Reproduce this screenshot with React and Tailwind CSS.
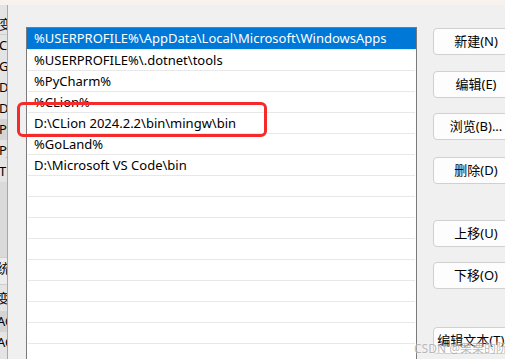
import React from "react";

// Edit environment variable dialog (Windows style)
const paths = [
  "%USERPROFILE%\\AppData\\Local\\Microsoft\\WindowsApps",
  "%USERPROFILE%\\.dotnet\\tools",
  "%PyCharm%",
  "%CLion%",
  "D:\\CLion 2024.2.2\\bin\\mingw\\bin",
  "%GoLand%",
  "D:\\Microsoft VS Code\\bin",
];

const buttons = [
  { label: "新建(N)", mt: "mt-0" },
  { label: "编辑(E)", mt: "mt-[16px]" },
  { label: "浏览(B)...", mt: "mt-[15px]" },
  { label: "删除(D)", mt: "mt-[17px]" },
  { label: "上移(U)", mt: "mt-[36px]" },
  { label: "下移(O)", mt: "mt-[15px]" },
  { label: "编辑文本(T)...", mt: "mt-[38px]" },
];

const sideRows = [
  { text: "变量", cls: "border-b border-[#cfcfcf]" },
  { text: "CLion", cls: "" },
  { text: "GoLand", cls: "" },
  { text: "DriverData", cls: "" },
  { text: "D...", cls: "" },
  { text: "Path", cls: "bg-[#d4d4d4]" },
  { text: "PyCharm", cls: "" },
  { text: "TEMP", cls: "" },
];

const App = () => {
  const emptyRows = Array.from({ length: 12 });

  return (
    <div className="w-[505px] h-[359px] overflow-hidden bg-[#f0f0f0] flex flex-col text-[13px] text-black font-['Noto_Sans','Noto_Sans_CJK_SC',sans-serif] relative">
      {/* top strip of the window behind */}
      <div className="h-[5px] bg-[#f8f2ef] shrink-0" />

      <div className="flex flex-1 min-h-0">
        {/* clipped parent window on the left */}
        <div className="w-[8px] shrink-0 bg-[#e4e4e4] border-r border-[#a8a8a8] overflow-hidden flex flex-col pt-[9px]">
          {sideRows.map((r, i) => (
            <div key={i} className={`h-[21px] shrink-0 leading-[21px] whitespace-nowrap -ml-[1px] ${r.cls}`}>
              {r.text}
            </div>
          ))}
          <div className="h-[75px] shrink-0 bg-[#dadada]" />
          <div className="h-[28px] shrink-0 leading-[21px] whitespace-nowrap -ml-[3px] border-y border-[#cfcfcf] bg-[#ececec]">
            统变量
          </div>
          <div className="h-[26px] shrink-0 leading-[26px] whitespace-nowrap -ml-[3px]">变量</div>
          <div className="h-[21px] shrink-0 leading-[21px] whitespace-nowrap -ml-[3px] bg-[#d4d4d4]">ACSvcPort</div>
          <div className="h-[21px] shrink-0 leading-[21px] whitespace-nowrap -ml-[3px]">ACSetupSvcPort</div>
        </div>

        <div className="flex flex-1 pl-[18px] pt-[22px]">
          {/* path list */}
          <div className="w-[391px] shrink-0 border border-[#7a7a7a] border-b-0 bg-white flex flex-col overflow-hidden">
            {paths.map((p, i) => (
              <div
                key={i}
                className={`h-[21px] shrink-0 leading-[20px] whitespace-nowrap ${
                  i === 0 ? "bg-[#0078d7] text-white px-[7px]" : "border-t border-[#e8e8e8] mx-[1px] px-[6px]"
                }`}
              >
                {p}
              </div>
            ))}
            {emptyRows.map((_, i) => (
              <div key={i} className="h-[21px] shrink-0 border-t border-[#e8e8e8] mx-[1px]" />
            ))}
          </div>

          {/* action buttons */}
          <div className="flex flex-col pl-[16px] pt-[1px]">
            {buttons.map((b) => (
              <button
                key={b.label}
                className={`w-[86px] h-[27px] shrink-0 rounded-[4px] border border-[#d0d0d0] bg-[#fdfdfd] text-[13px] whitespace-nowrap ${b.mt}`}
              >
                {b.label}
              </button>
            ))}
          </div>
        </div>
      </div>

      {/* red annotation box */}
      <div className="absolute left-[17px] top-[102px] w-[250px] h-[35px] border-[3px] border-[#f52a2a] rounded-[6px]" />

      {/* watermark */}
      <div className="absolute left-[414px] top-[340px] text-[12px] text-[#9a9a9a]/70 whitespace-nowrap [text-shadow:0_0_2px_white]">
        CSDN @栗栗的阮子
      </div>
    </div>
  );
};

export default App;
